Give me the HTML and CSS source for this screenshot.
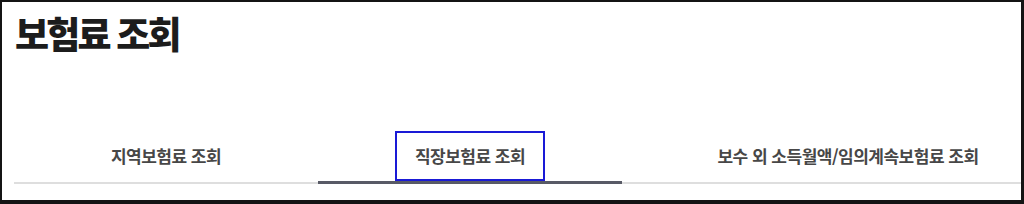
FILE: index.html
```html
<!DOCTYPE html>
<html lang="ko">
<head>
  <meta charset="UTF-8">
  <meta name="viewport" content="width=device-width, initial-scale=1.0">
  <title>보험료 조회</title>
  <link rel="stylesheet" href="styles.css">
</head>
<body>

  <div class="frame">
    <h1 class="page-title">보험료 조회</h1>

    <ul class="tabs">
      <li><a href="#">지역보험료 조회</a></li>
      <li class="active"><a href="#" class="focused">직장보험료 조회</a></li>
      <li class="wide"><a href="#">보수 외 소득월액/임의계속보험료 조회</a></li>
    </ul>
  </div>

</body>
</html>
```

FILE: styles.css
```css
body {
  margin: 0;
  background: #141414;
  font-family: "Noto Sans CJK KR", "Noto Sans", sans-serif;
}
.frame {
  background: #fff;
  margin: 2px 3px 4px 2px;
  height: 198px;
  overflow: hidden;
}
.page-title {
  margin: 0;
  padding: 10px 0 0 13px;
  font-size: 37px;
  line-height: 42px;
  font-weight: 800;
  letter-spacing: -2.8px;
  color: #1c1c1c;
}
.tabs {
  list-style: none;
  margin: 77px 0 0 12px;
  padding: 0;
  display: flex;
  border-bottom: 2px solid #dedede;
}
.tabs li {
  flex: 0 0 304px;
  text-align: center;
  margin-bottom: -2px;
  border-bottom: 3px solid transparent;
}
.tabs li.wide {
  flex-basis: 452px;
}
.tabs li.active {
  border-bottom-color: #585a66;
}
.tabs a {
  display: inline-block;
  height: 50px;
  line-height: 50px;
  padding: 0 20px;
  box-sizing: border-box;
  font-size: 17px;
  font-weight: 700;
  letter-spacing: -0.5px;
  color: #474747;
  text-decoration: none;
}
.tabs a.focused {
  outline: 2px solid #1a1ad6;
  outline-offset: -2px;
}
```
